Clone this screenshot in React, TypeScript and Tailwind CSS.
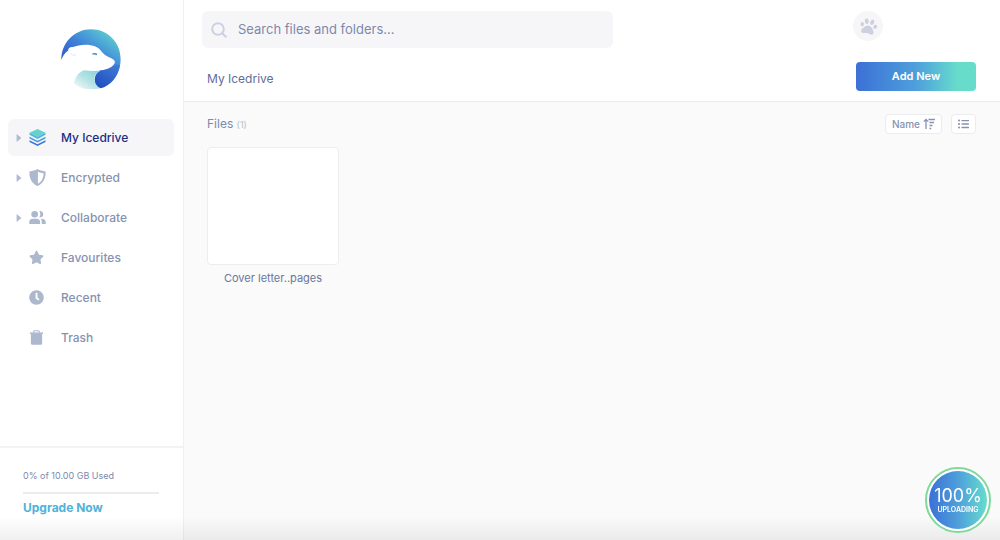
import type { ComponentType, ReactNode } from 'react';
import { FaClock, FaListUl, FaPaw, FaStar } from 'react-icons/fa';

type IconProps = { className?: string };

function Logo({ className }: IconProps) {
  return (
    <svg viewBox="34 27 176 176" role="img" aria-label="Icedrive" className={className}>
      <defs>
        <linearGradient id="logo-sky" gradientUnits="userSpaceOnUse" x1="90" y1="125" x2="160" y2="30">
          <stop offset="0" stopColor="#3567d0" />
          <stop offset="0.35" stopColor="#3f7fd6" />
          <stop offset="0.65" stopColor="#4a9fd8" />
          <stop offset="1" stopColor="#5cc8cf" />
        </linearGradient>
        <linearGradient id="logo-neck" x1="0.85" y1="0.1" x2="0.1" y2="0.9">
          <stop offset="0" stopColor="#8fd6da" />
          <stop offset="0.5" stopColor="#b5e4e6" />
          <stop offset="1" stopColor="#f3f5f6" />
        </linearGradient>
        <linearGradient id="logo-sea" x1="0.8" y1="0" x2="0.2" y2="0.9">
          <stop offset="0" stopColor="#3f7ad6" />
          <stop offset="1" stopColor="#2350bf" />
        </linearGradient>
      </defs>
      <path
        fill="url(#logo-sky)"
        d="M35 118C34 68 74 28 122 28c49 0 87 39 87 87 0 25-9 46-25 62l-36-28c20-2 44-12 44-25 0-9-13-12-24-18-14-8-17-21-33-28-20-8-48-6-66 2-9-1-14 4-14 10-10 7-16 17-20 28z"
      />
      <path
        fill="none"
        stroke="#dcebf4"
        strokeWidth="3"
        strokeLinecap="round"
        d="M63 99c4 5 10 6 14 3"
      />
      <path fill="#4a8fd4" d="M124 101c4-5 12-5 17-1l-3 4c-5-2-9-2-14-3z" />
      <path
        fill="url(#logo-neck)"
        d="M72 187c3-18 14-34 30-39 14 2 32 3 48 1-13 6-19 16-18 27 1 12 8 20 19 24-29 9-57 4-79-13z"
      />
      <path
        fill="url(#logo-sea)"
        d="M150 149c18-2 35-7 42-18l15 2c-5 34-28 60-57 68-11-5-17-14-17-25 0-12 6-21 17-27z"
      />
    </svg>
  );
}

function LayersIcon({ className }: IconProps) {
  return (
    <svg viewBox="0 0 16 16" aria-hidden="true" className={className}>
      <path fill="#62d4cd" d="M8 0 15.5 3.500 8 7.200.5 3.500z" />
      <path fill="#4fb3da" d="m.5 3.500 7.500 3.700 7.500-3.700v2L8 9.300.5 5.500z" />
      <path fill="#4a9bdc" d="M.5 7.400 8 11.100l7.500-3.700v1.600L8 12.700.5 9z" />
      <path fill="#3c73d6" d="M.5 10.700 8 14.400l7.500-3.700v1.600L8 16 .5 12.300z" />
    </svg>
  );
}

function ShieldIcon({ className }: IconProps) {
  return (
    <svg viewBox="0 0 16 16" fill="currentColor" aria-hidden="true" className={className}>
      <path
        fillRule="evenodd"
        d="M8 0c2 1.300 4.500 2 7.600 2.300C15.900 8.500 13.600 13.500 8 16 2.400 13.500.1 8.500.4 2.300 3.500 2 6 1.300 8 0zm.4 2.300v11.500c3.600-2 5.300-5.400 5.300-9.900-2-.2-3.900-.7-5.300-1.600z"
      />
    </svg>
  );
}

function PeopleIcon({ className }: IconProps) {
  return (
    <svg viewBox="0 0 18 16" fill="currentColor" aria-hidden="true" className={className}>
      <circle cx="6" cy="4.500" r="3.500" />
      <path d="M.3 15v-2.500C.3 10.400 2 9.200 4 9.200h4c2 0 3.700 1.200 3.700 3.300V15z" />
      <path d="M11 1.300a3.300 3.300 0 1 1 0 6.400c1.300-1.900 1.300-4.500 0-6.400z" />
      <path d="M12.300 9.300c3.200 0 5.400 1.200 5.400 3.400V15h-4.200v-2.500c0-1.300-.4-2.400-1.200-3.200z" />
    </svg>
  );
}

function TrashIcon({ className }: IconProps) {
  return (
    <svg viewBox="0 0 16 16" fill="currentColor" aria-hidden="true" className={className}>
      <path d="M2 4.200h12V14a1.600 1.600 0 0 1-1.600 1.600H3.600A1.600 1.600 0 0 1 2 14z" />
      <path d="M1 2.600h14v1.600H1z" />
      <path fill="none" stroke="currentColor" strokeWidth="1.200" d="M5 3V1.800C5 1.200 5.400.8 6 .8h4c.6 0 1 .4 1 1V3" />
    </svg>
  );
}

function SearchIcon({ className }: IconProps) {
  return (
    <svg
      viewBox="0 0 16 16"
      fill="none"
      stroke="currentColor"
      strokeWidth={2}
      strokeLinecap="round"
      aria-hidden="true"
      className={className}
    >
      <circle cx="7" cy="7" r="5.800" />
      <path d="m11.500 11.500 3.300 3.300" />
    </svg>
  );
}

function SortIcon({ className }: IconProps) {
  return (
    <svg
      viewBox="0 0 12 12"
      fill="none"
      stroke="currentColor"
      strokeWidth={1.3}
      aria-hidden="true"
      className={className}
    >
      <path d="M3 11V2M.8 3.600 3 1.400l2.200 2.200M5.500 1.500H12M6.500 4.500H11M6.500 7.500H9.500M6.500 10.500H8.200" />
    </svg>
  );
}

type NavItem = {
  label: string;
  icon: ComponentType<IconProps>;
  expandable?: boolean;
  active?: boolean;
};

const nav: NavItem[] = [
  { label: 'My Icedrive', icon: LayersIcon, expandable: true, active: true },
  { label: 'Encrypted', icon: ShieldIcon, expandable: true },
  { label: 'Collaborate', icon: PeopleIcon, expandable: true },
  { label: 'Favourites', icon: FaStar },
  { label: 'Recent', icon: FaClock },
  { label: 'Trash', icon: TrashIcon },
];

function NavLink({ label, icon: Icon, expandable, active }: NavItem) {
  return (
    <a
      href="#"
      aria-current={active ? 'page' : undefined}
      className={`flex h-[37px] items-center rounded-md pl-2 text-[12px] font-medium ${
        active ? 'bg-[#f6f6f9] text-[#1b2f87]' : 'text-[#8692b1]'
      }`}
    >
      <span className="w-[13px] text-[#b0b9cf]">
        {expandable && (
          <svg viewBox="0 0 6 10" fill="currentColor" aria-hidden="true" className="h-2 w-[6px]">
            <path d="M0 0 6 5 0 10z" />
          </svg>
        )}
      </span>
      <span className="flex w-[17px] text-[#adb7cd]">
        <Icon className={expandable ? 'h-[17px] w-[17px]' : 'h-[15px] w-[15px]'} />
      </span>
      <span className="ml-[15px]">{label}</span>
    </a>
  );
}

function Sidebar() {
  return (
    <aside className="flex w-[184px] shrink-0 flex-col border-r border-[#f0f0f1] bg-white">
      <Logo className="mt-[29px] ml-[61px] h-[60px] w-[60px]" />
      <nav aria-label="Main" className="mt-[30px] flex flex-col gap-[3px] pr-[9px] pl-2">
        {nav.map((item) => (
          <NavLink key={item.label} {...item} />
        ))}
      </nav>
      <div className="mt-auto border-t-2 border-[#f3f3f4] pt-5 pr-6 pb-[23px] pl-[23px]">
        <p className="text-[9px] leading-4 text-[#7d89ab]">0% of 10.00 GB Used</p>
        <div className="mt-2 h-[2px] bg-[#ececee]" />
        <a href="#" className="mt-[5px] block text-[12px] leading-[18px] font-bold text-[#4fb2d8]">
          Upgrade Now
        </a>
      </div>
    </aside>
  );
}

function ToolButton({ label, children }: { label?: string; children: ReactNode }) {
  return (
    <button
      type="button"
      aria-label={label}
      className="flex h-5 items-center gap-[3px] rounded border border-[#ececf0] bg-white px-[6px] text-[10px] font-medium text-[#8692b1]"
    >
      {children}
    </button>
  );
}

function Header() {
  return (
    <header className="border-b border-[#ebebed] bg-white pr-6 pb-[10px] pl-[18px]">
      <div className="flex items-center justify-between pt-[11px]">
        <label className="flex h-[37px] w-1/2 max-w-[411px] min-w-[240px] grow items-center gap-[11px] rounded-md bg-[#f6f6f9] px-[9px]">
          <SearchIcon className="h-4 w-4 shrink-0 text-[#cdd1df]" />
          <input
            type="text"
            aria-label="Search files and folders"
            placeholder="Search files and folders..."
            className="w-full bg-transparent text-[13px] text-[#7d89ab] outline-none placeholder:text-[#7d89ab]"
          />
        </label>
        <button
          type="button"
          aria-label="Account"
          className="mr-[93px] grid h-[30px] w-[30px] place-items-center self-start rounded-full bg-[#f6f6f8] text-[#cdd1df]"
        >
          <FaPaw className="h-[17px] w-[17px] rotate-12" />
        </button>
      </div>
      <div className="mt-[14px] flex items-center justify-between pl-[5px]">
        <h1 className="pt-1 text-[12px] text-[#5f6d99]">My Icedrive</h1>
        <button
          type="button"
          className="h-[29px] w-[120px] rounded bg-linear-to-r from-[#3c70d6] via-[#4f9fdb] to-[#68dccb] to-85% text-[11px] font-semibold text-white"
        >
          Add New
        </button>
      </div>
    </header>
  );
}

function FileCard({ name }: { name: string }) {
  return (
    <figure className="w-[132px]">
      <div className="h-[118px] rounded border border-[#ededf0] bg-white" />
      <figcaption className="mt-[5px] text-center text-[11px] leading-4 text-[#6a779f]">
        {name}
      </figcaption>
    </figure>
  );
}

function UploadBadge() {
  return (
    <div
      role="status"
      className="fixed right-[9px] bottom-[7px] h-[66px] w-[66px] rounded-full border-2 border-[#7fd99a] bg-white p-[2px]"
    >
      <div className="flex h-full flex-col items-center justify-center rounded-full bg-linear-to-r from-[#3c70d6] via-[#4f9fdb] to-[#68dccb] text-white">
        <span className="text-[18px] leading-[19px]">100%</span>
        <span className="text-[7px] leading-[9px] font-semibold">UPLOADING</span>
      </div>
    </div>
  );
}

export default function App() {
  return (
    <div className="flex min-h-screen bg-[#fafafa] font-['Inter',sans-serif]">
      <Sidebar />
      <div className="flex min-w-0 grow flex-col">
        <Header />
        <main className="pt-3 pr-6 pl-[23px]">
          <div className="flex items-center justify-between">
            <h2 className="text-[12px] text-[#7d89ab]">
              Files <span className="text-[9px] text-[#b4bbcf]">(1)</span>
            </h2>
            <div className="flex gap-[9px]">
              <ToolButton>
                Name
                <SortIcon className="h-3 w-3" />
              </ToolButton>
              <ToolButton label="List view">
                <FaListUl className="h-3 w-[11px]" />
              </ToolButton>
            </div>
          </div>
          <div className="mt-[13px] flex flex-wrap gap-4">
            <FileCard name="Cover letter..pages" />
          </div>
        </main>
      </div>
      <div className="pointer-events-none fixed inset-x-0 bottom-0 h-6 bg-linear-to-t from-black/6 to-transparent" />
      <UploadBadge />
    </div>
  );
}
